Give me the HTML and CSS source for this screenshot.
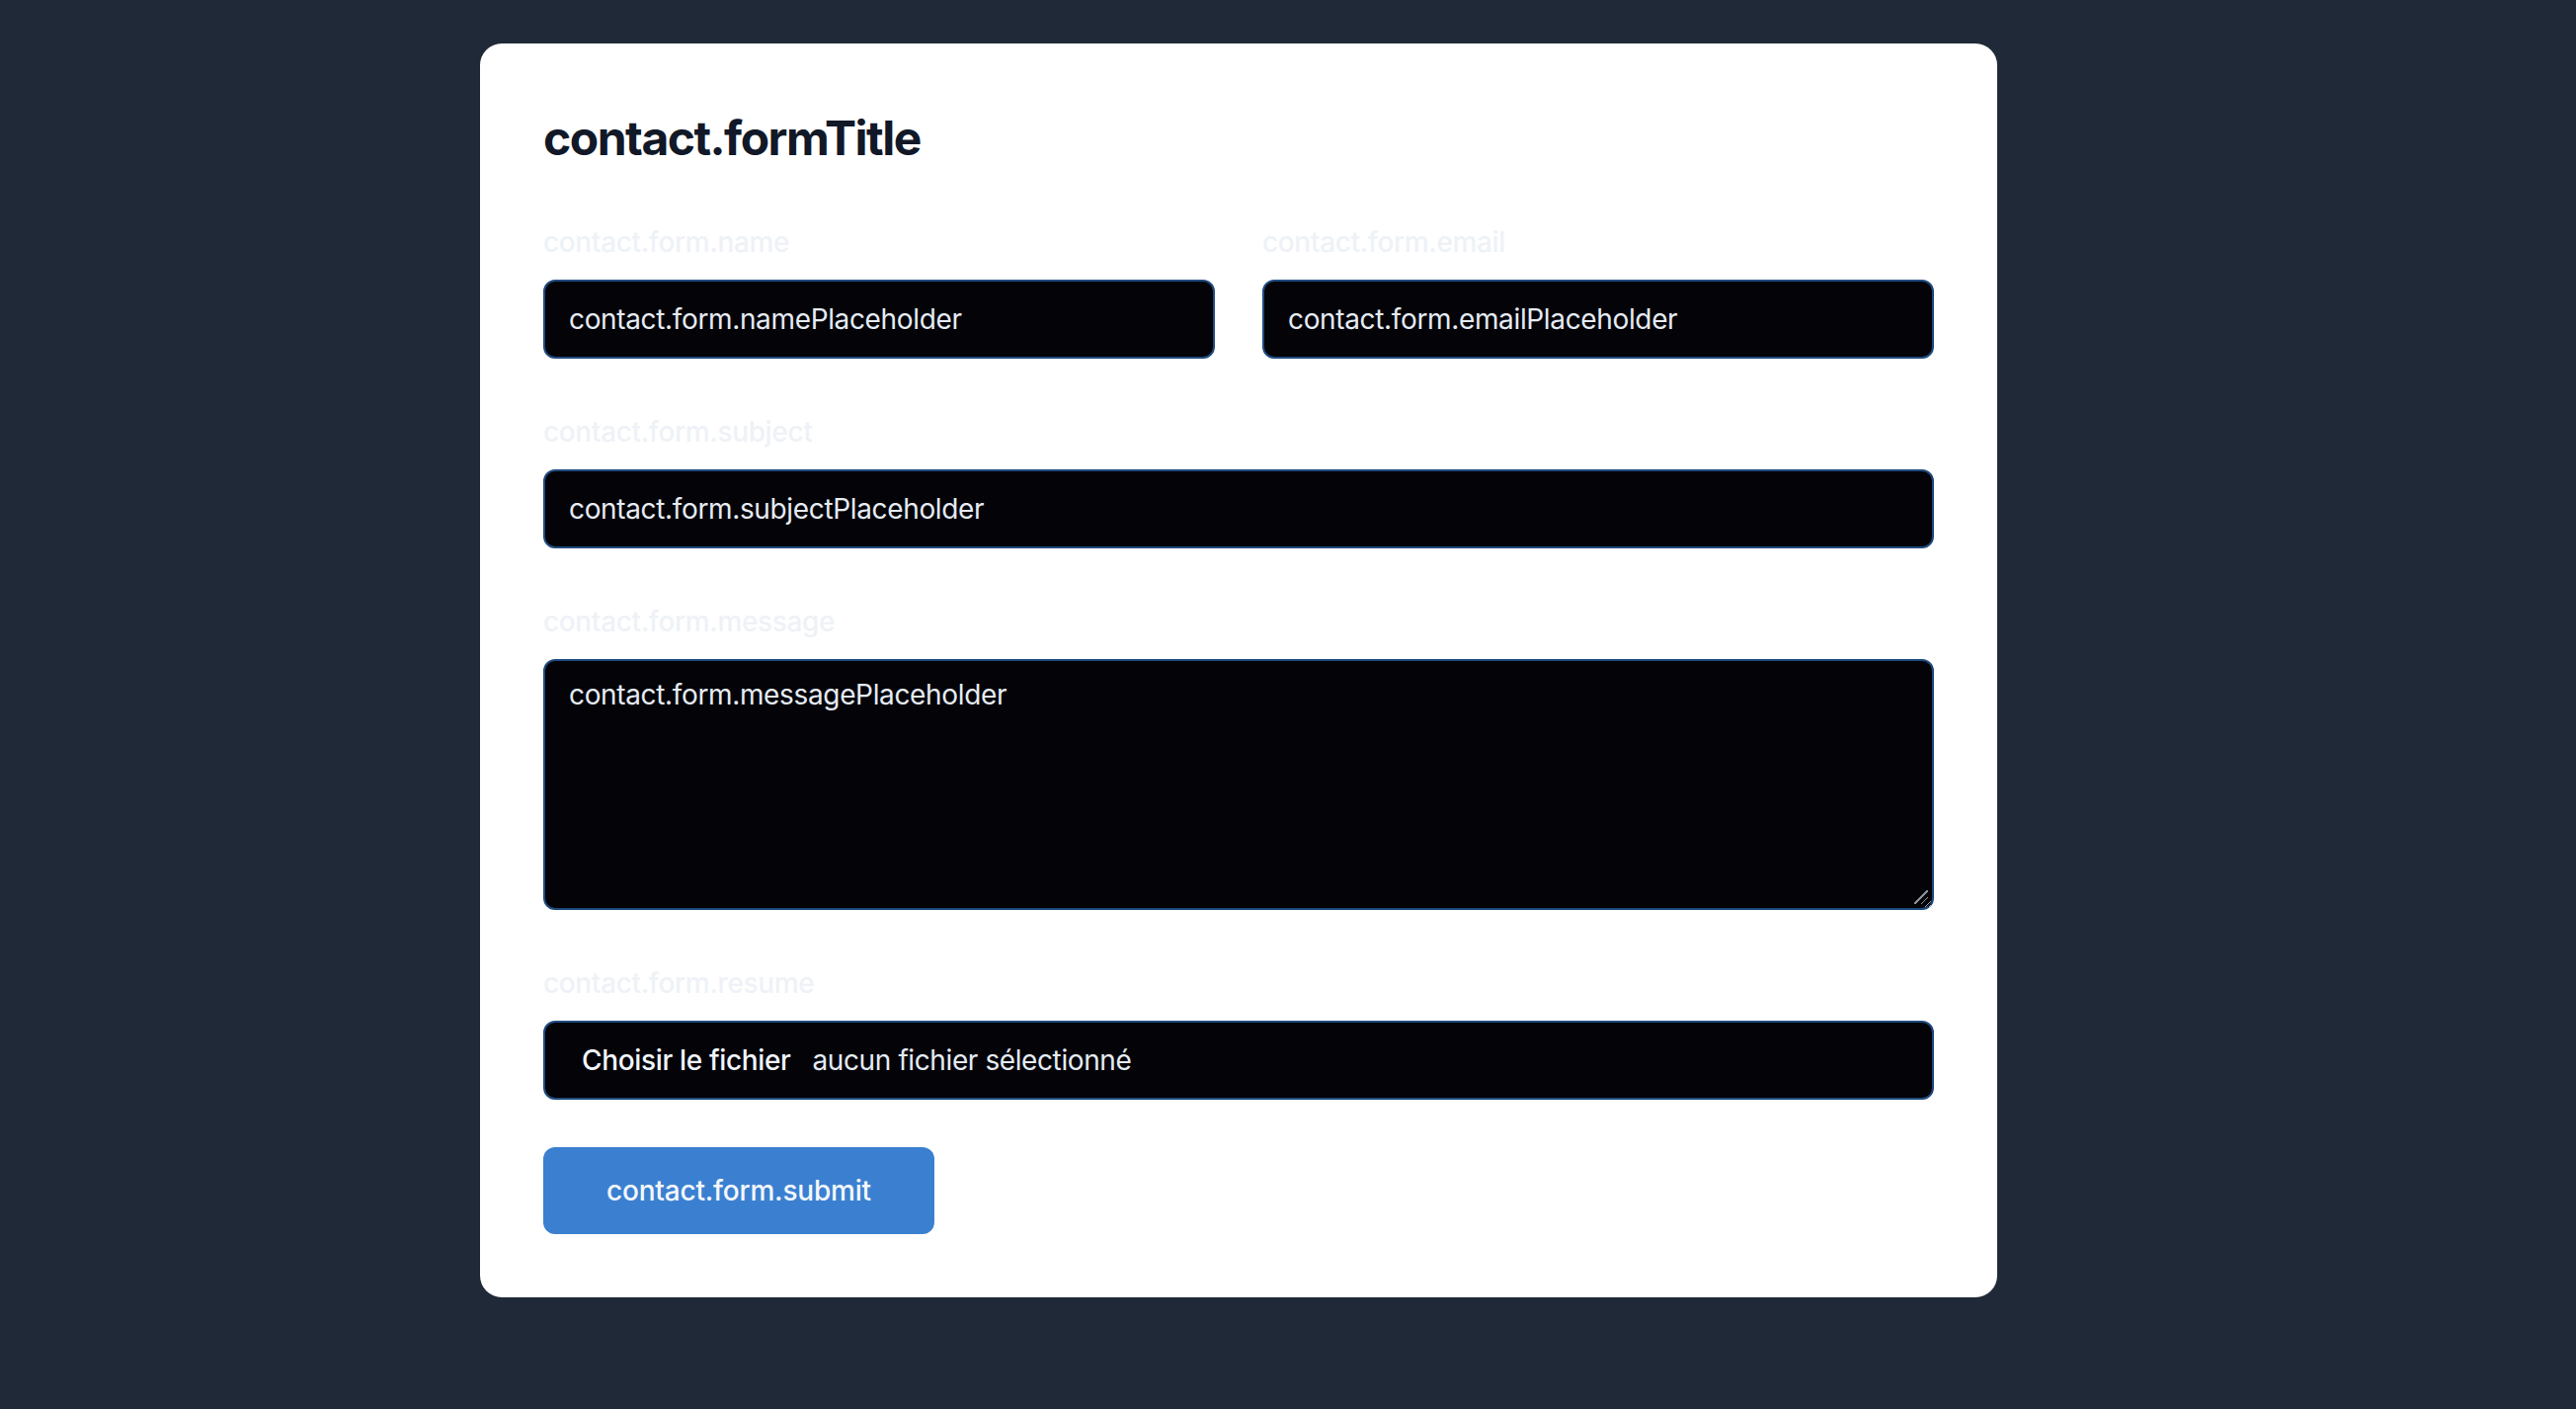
FILE: index.html
```html
<!DOCTYPE html>
<html lang="fr">
<head>
<meta charset="utf-8">
<title>contact.formTitle</title>
<link rel="stylesheet" href="styles.css">
</head>
<body>
<main class="page">
  <section class="card">
    <h1 class="card-title">contact.formTitle</h1>
    <form class="form">
      <div class="row">
        <div class="field">
          <label class="label" for="name">contact.form.name</label>
          <input class="input" id="name" type="text" placeholder="contact.form.namePlaceholder">
        </div>
        <div class="field">
          <label class="label" for="email">contact.form.email</label>
          <input class="input" id="email" type="email" placeholder="contact.form.emailPlaceholder">
        </div>
      </div>
      <div class="field">
        <label class="label" for="subject">contact.form.subject</label>
        <input class="input" id="subject" type="text" placeholder="contact.form.subjectPlaceholder">
      </div>
      <div class="field">
        <label class="label" for="message">contact.form.message</label>
        <div class="textarea-wrap">
          <textarea class="input textarea" id="message" placeholder="contact.form.messagePlaceholder"></textarea>
          <span class="grip" aria-hidden="true"></span>
        </div>
      </div>
      <div class="field">
        <span class="label">contact.form.resume</span>
        <label class="input file">
          <span class="file-btn">Choisir le fichier</span>
          <span class="file-name">aucun fichier sélectionné</span>
        </label>
      </div>
      <div class="actions">
        <button class="submit" type="button">contact.form.submit</button>
      </div>
    </form>
  </section>
</main>
</body>
</html>
```

FILE: styles.css
```css
html, body {
  margin: 0;
  padding: 0;
}

body {
  background: #1f2937;
  min-height: 100vh;
  font-family: Inter, "Noto Sans", "Liberation Sans", sans-serif;
}

.page {
  display: flex;
  align-items: flex-start;
  padding: 44px 0 0 486px;
}

.card {
  width: 1536px;
  box-sizing: border-box;
  background: #ffffff;
  border-radius: 22px;
  padding: 64px;
}

.card-title {
  margin: 0 0 47px;
  font-size: 48px;
  line-height: 64px;
  font-weight: 700;
  color: #111827;
  letter-spacing: -1.5px;
}

.form {
  display: flex;
  flex-direction: column;
  gap: 48px;
}

.row {
  display: grid;
  grid-template-columns: 1fr 1fr;
  gap: 48px;
}

.field {
  display: flex;
  flex-direction: column;
}

.label {
  display: block;
  font-size: 28px;
  line-height: 52px;
  font-weight: 500;
  color: #eef2f7;
  letter-spacing: -0.35px;
  margin-bottom: 12px;
}

.input {
  display: block;
  width: 100%;
  height: 80px;
  box-sizing: border-box;
  margin: 0;
  padding: 0 24px;
  border: 2px solid #1f4b7f;
  border-radius: 12px;
  background: #030308;
  color: #e5ebf3;
  font-family: Inter, "Noto Sans", "Liberation Sans", sans-serif;
  font-size: 28px;
  line-height: 40px;
  letter-spacing: -0.35px;
  outline: none;
}

.input::placeholder {
  color: #e5ebf3;
  opacity: 1;
}

.textarea-wrap {
  position: relative;
}

.textarea {
  height: 254px;
  padding: 14px 24px;
  resize: vertical;
}

.grip {
  position: absolute;
  right: 6px;
  bottom: 6px;
  width: 14px;
  height: 14px;
  pointer-events: none;
  background:
    linear-gradient(135deg, transparent 0 46%, #8a8f98 46% 56%, transparent 56%) no-repeat right bottom / 14px 14px,
    linear-gradient(135deg, transparent 0 46%, #8a8f98 46% 56%, transparent 56%) no-repeat right bottom / 7px 7px;
}

.file {
  display: flex;
  align-items: center;
  cursor: pointer;
}

.file-btn {
  padding: 0 13px 0 13px;
  color: #f1f5fb;
  font-weight: 500;
  letter-spacing: -0.35px;
}

.file-name {
  margin-left: 9px;
  color: #e5ebf3;
  letter-spacing: -0.4px;
}

.actions {
  display: flex;
}

.submit {
  height: 88px;
  padding: 0 64px;
  border: none;
  border-radius: 12px;
  background: #3b80d0;
  color: #f3f7fc;
  font-family: Inter, "Noto Sans", "Liberation Sans", sans-serif;
  font-size: 28px;
  line-height: 40px;
  font-weight: 500;
  letter-spacing: -0.2px;
  cursor: pointer;
}
```
